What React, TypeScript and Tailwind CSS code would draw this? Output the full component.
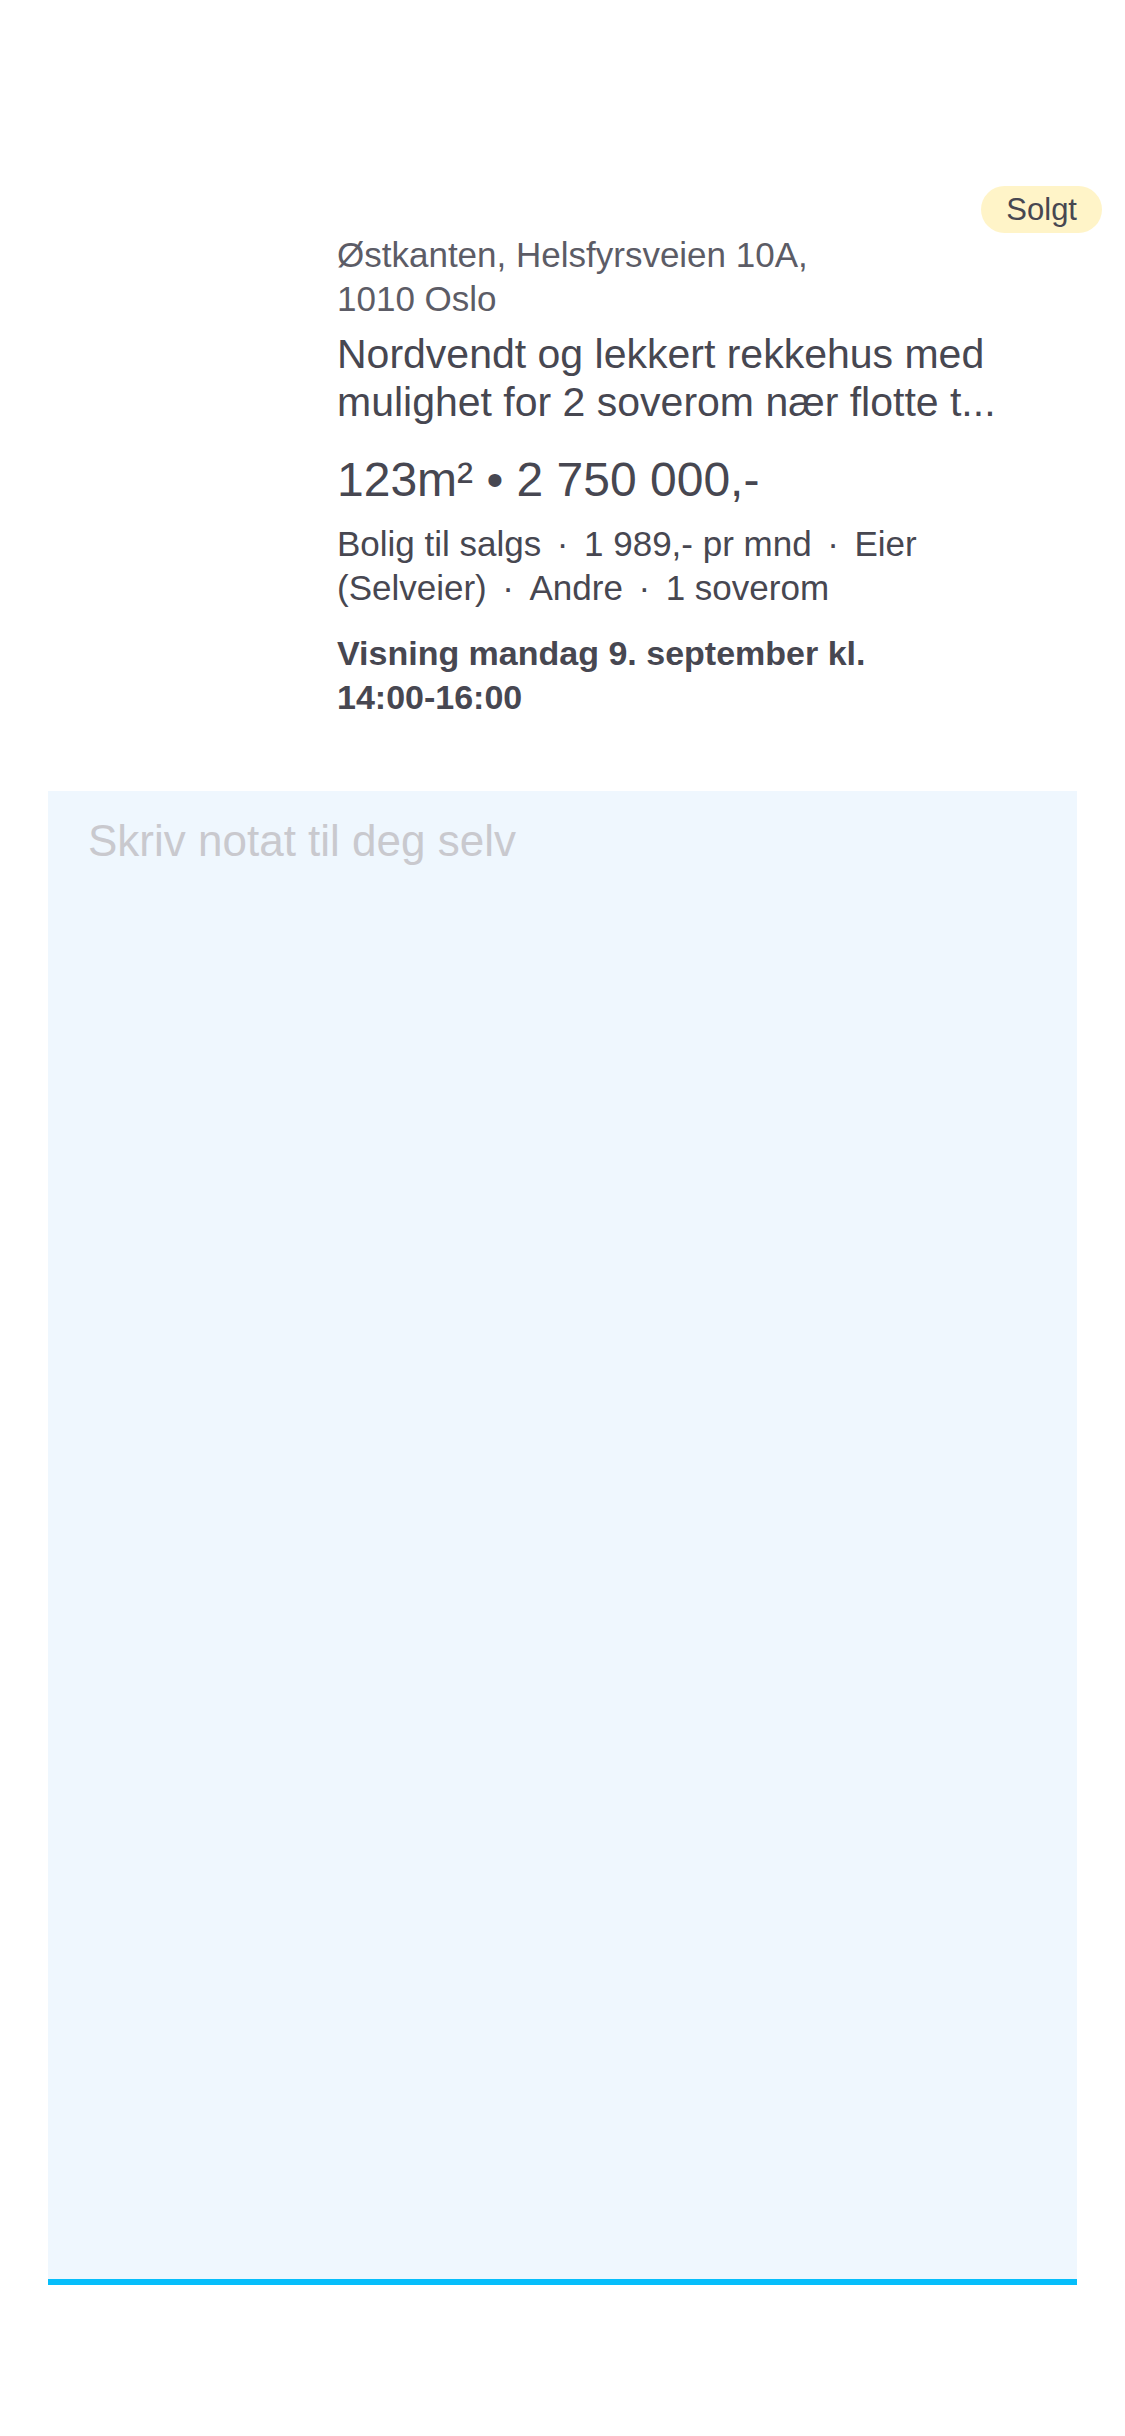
import React from 'react';

// separator with a dot, no break before it, break allowed after it
const SEP = '\u00a0\u2006\u2060·\u2006\u00a0\u200b';
const meta = ['Bolig til salgs', '1 989,- pr mnd', 'Eier (Selveier)', 'Andre', '1 soverom'].join(SEP);

const App: React.FC = () => {
  return (
    <div className="min-h-[2436px] w-[1125px] bg-white font-['Liberation_Sans',Arial,sans-serif] text-[#474751]">
      <div className="pt-[186px]">
        <div className="flex justify-end pr-[23px]">
          <span className="flex h-[47px] items-center rounded-full bg-[#fff4c8] px-[25px] text-[31px] leading-none text-[#474751]">
            Solgt
          </span>
        </div>

        <div className="flex pl-[48px]">
          <div className="w-[289px] shrink-0" />
          <div className="w-[700px]">
            <div className="text-[35px] leading-[43.5px] text-[#5c5c66]">
              <p>Østkanten, Helsfyrsveien 10A,</p>
              <p>1010 Oslo</p>
            </div>
            <p className="mt-[10px] text-[41px] leading-[48px]">
              Nordvendt og lekkert rekkehus med mulighet for 2 soverom nær flotte t...
            </p>
            <p className="mt-[26px] text-[48px] leading-[56px] font-medium">
              123m² • 2 750 000,-
            </p>
            <p className="mt-[14px] text-[35px] leading-[43.5px]">{meta}</p>
            <p className="mt-[23px] text-[34px] leading-[43.5px] font-bold">
              Visning mandag 9. september kl. <span className="whitespace-nowrap">14:00-16:00</span>
            </p>
          </div>
        </div>

        <div className="mt-[72px] px-[48px]">
          <textarea
            placeholder="Skriv notat til deg selv"
            className="block h-[1494px] w-full resize-none border-0 border-b-[6px] border-[#06befb] bg-[#eff7fe] px-[40px] pt-[22px] text-[44px] leading-[56px] text-[#474751] outline-none placeholder:text-[#c9c9ce]"
          />
        </div>
      </div>
    </div>
  );
};

export default App;
